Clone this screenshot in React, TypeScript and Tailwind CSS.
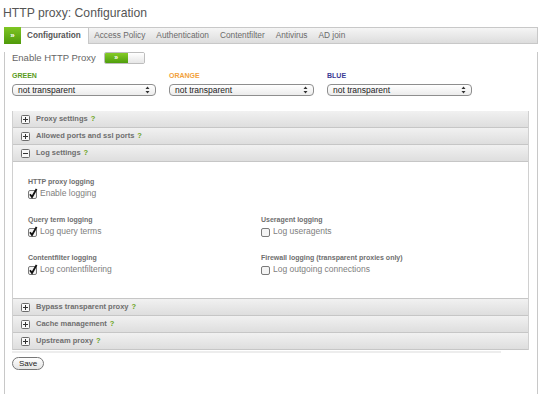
import React from 'react';

const tabs = ['Access Policy', 'Authentication', 'Contentfilter', 'Antivirus', 'AD join'];

const Help = () => <span className="text-[#6aa324] ml-[3px]">?</span>;

const BoxIcon = ({ open }: { open?: boolean }) => (
  <svg width="9" height="9" viewBox="0 0 9 9" className="shrink-0">
    <rect x="0.5" y="0.5" width="8" height="8" rx="1" fill="#f8f8f8" stroke="#6b6b6b" />
    <rect x="2" y="4" width="5" height="1" fill="#333" />
    {!open && <rect x="4" y="2" width="1" height="5" fill="#333" />}
  </svg>
);

const SectionHeader = ({ title, open }: { title: string; open?: boolean }) => (
  <div className="flex items-center h-[17px] pl-[8px] border-b border-[#c6c6c6] bg-gradient-to-b from-[#f1f1f1] to-[#dedede] text-[7.5px] font-bold text-[#6e6e6e]">
    <BoxIcon open={open} />
    <span className="ml-[6px]">{title}</span>
    <Help />
  </div>
);

const Check = ({ checked }: { checked?: boolean }) => (
  <svg width="11" height="11" viewBox="0 0 11 11" className="shrink-0 mr-[1px]">
    <rect x="0.5" y="2.5" width="8" height="8" rx="1.5" fill="#f4f4f4" stroke="#7a7a7a" />
    {checked && <path d="M2 6.2 L4 9 L8.6 1" fill="none" stroke="#111" strokeWidth="1.8" />}
  </svg>
);

const Option = ({ label, text, checked }: { label: string; text: string; checked?: boolean }) => (
  <div>
    <div className="h-[10px] leading-[10px] text-[7px] font-bold text-[#6e6e6e]">{label}</div>
    <div className="flex items-center h-[12px] text-[8.5px] text-[#808080]">
      <Check checked={checked} />
      <span>{text}</span>
    </div>
  </div>
);

const Select = () => (
  <div className="flex items-center justify-between h-[12px] px-[5px] rounded-[4px] border border-[#8e8e8e] bg-gradient-to-b from-white to-[#ececec] text-[8.5px] text-[#222]">
    <span>not transparent</span>
    <svg width="5" height="8" viewBox="0 0 5 8">
      <path d="M0.5 3 L2.5 0.5 L4.5 3 Z M0.5 5 L2.5 7.5 L4.5 5 Z" fill="#333" />
    </svg>
  </div>
);

export default function App() {
  return (
    <div className="w-[540px] h-[394px] bg-white text-[#555] font-['Liberation_Sans',Arial,sans-serif]">
      <h1 className="pl-[3px] pt-[3px] h-[23px] text-[12.2px] leading-[20px] text-[#555]">HTTP proxy: Configuration</h1>

      <div className="ml-[4px] mr-[2px] mt-[4px]">
        <div className="flex h-[17px] border border-[#c8c8c8] bg-gradient-to-b from-[#f5f5f5] to-[#dddddd] text-[8.3px] text-[#6a6a6a]">
          <div className="w-[17px] -ml-px -mt-px h-[17px] flex items-center justify-center bg-gradient-to-b from-[#7fc623] to-[#4f9a0a] text-white text-[8px] font-bold">»</div>
          <div className="flex items-center pl-[6px] pr-[7px] bg-white border-r border-[#c8c8c8] h-[16px] font-bold text-[#555] text-[8.2px]">Configuration</div>
          {tabs.map((t) => (
            <div key={t} className="flex items-center px-[5.5px]">{t}</div>
          ))}
        </div>

        <div className="h-[345px] border-x border-b border-[#c8c8c8] pl-[7px] pr-[8px]">
          <div className="flex items-center h-[12px] mt-[8px]">
            <span className="text-[9.5px] text-[#666]">Enable HTTP Proxy</span>
            <div className="flex ml-[8px] h-[12px] w-[41px] rounded-[2px] border border-[#bdbdbd] overflow-hidden">
              <div className="w-[23px] flex items-center justify-center bg-gradient-to-b from-[#85cc26] to-[#4f9e0b] text-white text-[7px] font-bold">»</div>
              <div className="flex-1 bg-gradient-to-b from-white to-[#e6e6e6]" />
            </div>
          </div>

          <div className="grid grid-cols-[144px_145px_145px] gap-x-[13px] mt-[7px]">
            <div className="h-[10px] leading-[10px] text-[7px] font-bold text-[#5a9c1b]">GREEN</div>
            <div className="h-[10px] leading-[10px] text-[7px] font-bold text-[#f2a23c]">ORANGE</div>
            <div className="h-[10px] leading-[10px] text-[7px] font-bold text-[#3b3b94]">BLUE</div>
            <div className="mt-[3px]"><Select /></div>
            <div className="mt-[3px]"><Select /></div>
            <div className="mt-[3px]"><Select /></div>
          </div>

          <div className="mt-[15px] border-x border-[#d0d0d0]">
            <SectionHeader title="Proxy settings" />
            <SectionHeader title="Allowed ports and ssl ports" />
            <SectionHeader title="Log settings" open />
            <div className="h-[137px] bg-white border-b border-[#c6c6c6] pl-[15px] pt-[15px]">
              <Option label="HTTP proxy logging" text="Enable logging" checked />
              <div className="grid grid-cols-[233px_1fr] gap-y-[16px] mt-[16px]">
                <Option label="Query term logging" text="Log query terms" checked />
                <Option label="Useragent logging" text="Log useragents" />
                <Option label="Contentfilter logging" text="Log contentfiltering" checked />
                <Option label="Firewall logging (transparent proxies only)" text="Log outgoing connections" />
              </div>
            </div>
            <SectionHeader title="Bypass transparent proxy" />
            <SectionHeader title="Cache management" />
            <SectionHeader title="Upstream proxy" />
          </div>
          <div className="h-[2px] bg-[#ededed] mr-[28px] mt-[1px]" />

          <button className="block mt-[4px] h-[13px] px-[6px] rounded-full border border-[#777] bg-gradient-to-b from-white to-[#e4e4e4] text-[8px] leading-[11px] text-[#222]">Save</button>
        </div>
      </div>
    </div>
  );
}
